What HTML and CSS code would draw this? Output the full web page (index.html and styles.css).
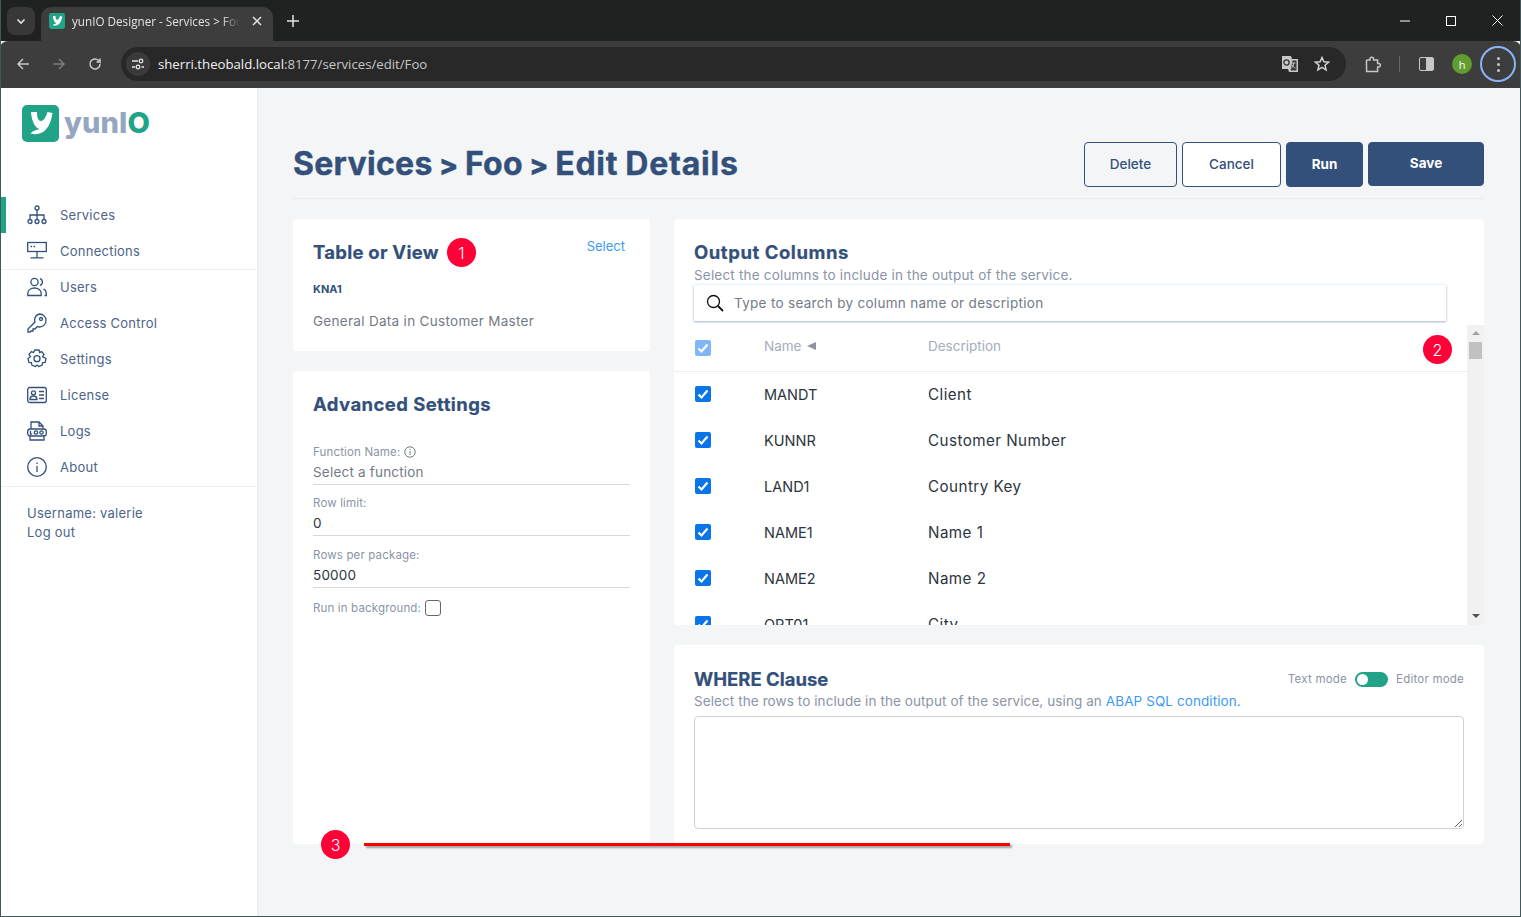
FILE: index.html
```html
<!DOCTYPE html>
<html lang="en">
<head>
<meta charset="utf-8">
<title>yunIO Designer - Services &gt; Foo</title>
<link rel="stylesheet" href="styles.css">
</head>
<body>
<div class="window">
  <header class="tabstrip">
    <button class="tab-search"><svg width="12" height="12" viewBox="0 0 12 12"><path d="M2.5 4.5 6 8l3.5-3.5" fill="none" stroke="#e3e3e3" stroke-width="1.6"/></svg></button>
    <div class="tab">
      <svg class="favicon" viewBox="0 0 37 37"><rect width="37" height="37" rx="5" fill="#20a386"/><path d="M9.500 7H15c0 5 1 9 4 9 2.500 0 5-4 6.500-9l5 1c-1 7-3.500 14-8 18-3 2.700-9 4-14 2.500 2-2.500 6-4 9-4.200-5-2-8-9-8.500-17.300z" fill="#fff"/></svg>
      <span class="tab-title">yunIO Designer - Services &gt; Foo</span>
      <svg class="tab-close" width="10" height="10" viewBox="0 0 10 10"><path d="M1 1l8 8M9 1l-8 8" stroke="#e3e3e3" stroke-width="1.500"/></svg>
    </div>
    <svg class="new-tab" width="12" height="12" viewBox="0 0 12 12"><path d="M6 0v12M0 6h12" stroke="#e3e3e3" stroke-width="1.500"/></svg>
    <div class="win-controls">
      <svg width="10" height="10" viewBox="0 0 10 10"><path d="M0 5h10" stroke="#fff"/></svg>
      <svg width="10" height="10" viewBox="0 0 10 10"><rect x=".5" y=".5" width="9" height="9" fill="none" stroke="#fff"/></svg>
      <svg width="11" height="11" viewBox="0 0 11 11"><path d="M.5.5l10 10M10.500.5l-10 10" stroke="#fff"/></svg>
    </div>
  </header>
  <nav class="toolbar">
    <svg class="tb-icon" width="16" height="16" viewBox="0 0 16 16"><path d="M14 8H3M8 3 3 8l5 5" fill="none" stroke="#c7c7c7" stroke-width="1.500"/></svg>
    <svg class="tb-icon" width="16" height="16" viewBox="0 0 16 16"><path d="M2 8h11M8 3l5 5-5 5" fill="none" stroke="#7b7b7b" stroke-width="1.500"/></svg>
    <svg class="tb-icon" width="16" height="16" viewBox="0 0 16 16"><path d="M13 8a5 5 0 1 1-1.500-3.600L13 6V2.500M13 6H9.500" fill="none" stroke="#c7c7c7" stroke-width="1.500"/></svg>
    <div class="omnibox">
      <span class="site-btn"><svg width="14" height="12" viewBox="0 0 14 12"><path d="M1 3h6M1 9h3M10.500 9H13" stroke="#e3e3e3" stroke-width="1.400" fill="none"/><circle cx="10" cy="3" r="1.800" fill="none" stroke="#e3e3e3" stroke-width="1.300"/><circle cx="7" cy="9" r="1.800" fill="none" stroke="#e3e3e3" stroke-width="1.300"/></svg></span>
      <span class="url"><b>sherri.theobald.local</b>:8177/services/edit/Foo</span>
      <svg class="omni-translate" width="18" height="18" viewBox="0 0 18 18"><path d="M1 1h9l1 3h6v13H8l-1-3H1z" fill="#c7c7c7"/><path d="M11 5h5v11H9z" fill="#3a3a3a" stroke="#c7c7c7"/><circle cx="5.500" cy="7.500" r="2.600" fill="none" stroke="#333" stroke-width="1.300"/><path d="M10.500 8h4M12.500 8c0 3-1 4.500-2 5M11 10c.8 1.500 2 2.500 3.500 3" stroke="#c7c7c7" fill="none"/></svg>
      <svg class="omni-star" width="16" height="16" viewBox="0 0 16 16"><path d="M8 1.500l1.900 4.300 4.600.4-3.500 3 1.100 4.600L8 11.300l-4.100 2.500L5 9.200l-3.500-3 4.600-.4z" fill="none" stroke="#d0d0d0" stroke-width="1.500"/></svg>
    </div>
    <svg class="tb-ext" width="17" height="17" viewBox="0 0 17 17"><path d="M1.500 4H5V3a1.800 1.800 0 0 1 3.600 0v1h4v3.500h1a1.800 1.800 0 0 1 0 3.600h-1v4.400h-11V12" fill="none" stroke="#c7c7c7" stroke-width="1.500"/><path d="M1.500 4v8" stroke="#c7c7c7" stroke-width="1.500"/></svg>
    <span class="tb-sep"></span>
    <span class="tb-panel"></span>
    <span class="avatar">h</span>
    <span class="menu-btn"><i></i><i></i><i></i></span>
  </nav>
  <div class="app">
    <aside class="sidebar">
      <div class="brand">
        <svg class="brand-mark" viewBox="0 0 37 37"><rect width="37" height="37" rx="5" fill="#20a386"/><path d="M9.500 7H15c0 5 1 9 4 9 2.500 0 5-4 6.500-9l5 1c-1 7-3.500 14-8 18-3 2.700-9 4-14 2.500 2-2.500 6-4 9-4.200-5-2-8-9-8.500-17.300z" fill="#fff"/></svg>
        <span class="brand-text">yunI<em>O</em></span>
      </div>
      <ul class="nav nav-first">
        <li class="nav-item active"><svg class="nav-icon" viewBox="0 0 20 20"><circle cx="10" cy="3" r="2"/><circle cx="3" cy="16.500" r="2"/><circle cx="10" cy="16.500" r="2"/><circle cx="17" cy="16.500" r="2"/><path d="M10 5v9.500M3 14.500V10h14v4.500"/></svg>Services</li>
        <li class="nav-item"><svg class="nav-icon" viewBox="0 0 20 20"><rect x=".7" y="1.500" width="18.600" height="9"/><path d="M3.500 5.500h1.500M6.500 5.500h1.500M10 10.500v6M3.500 16.800h13"/></svg>Connections</li>
      </ul>
      <ul class="nav nav-second">
        <li class="nav-item"><svg class="nav-icon" viewBox="0 0 20 20"><circle cx="7.500" cy="5" r="3.600"/><path d="M.8 18.500v-2c0-3.500 3-5.500 6.700-5.500s6.700 2 6.700 5.500v2zM13 1.600a3.600 3.600 0 0 1 0 6.800M16.500 12c1.800.8 2.800 2.300 2.800 4.500v2h-1.800"/></svg>Users</li>
        <li class="nav-item"><svg class="nav-icon" viewBox="0 0 20 20"><path d="M12.500 1a6.500 6.500 0 0 1 0 13c-.8 0-1.500-.1-2.200-.4L8 16H6v2H4l-1 1H1v-3l7-7c-.3-.7-.4-1.400-.4-2.200A6.500 6.500 0 0 1 12.500 1z"/><circle cx="14" cy="6" r="1.500"/></svg>Access Control</li>
        <li class="nav-item"><svg class="nav-icon" viewBox="0 0 20 20"><path d="M8 1h4l.6 2.500 2-.9 2.400 3-1.500 2.100L19 9.500l-.9 3.800-2.500.2-.4 2.500-3.500 1.500L10 16l-1.700 1.500-3.500-1.500-.4-2.500-2.500-.2L1 9.500l2.500-1.800L2 5.600l2.400-3 2 .9z"/><circle cx="10" cy="9.700" r="3"/></svg>Settings</li>
        <li class="nav-item"><svg class="nav-icon" viewBox="0 0 20 20"><rect x=".7" y="2.500" width="18.600" height="15" rx="2"/><circle cx="6.500" cy="7.800" r="2"/><path d="M3 14.500c0-2.500 1.500-3.500 3.500-3.500s3.500 1 3.500 3.500zM12 6.500h5M12 10h5M12 13.500h5"/></svg>License</li>
        <li class="nav-item"><svg class="nav-icon" viewBox="0 0 20 20"><path d="M4 8V1h8l4 4v3M12 1v4h4M3 14v5h14v-5"/><rect x=".7" y="8" width="18.600" height="7" rx="2.500"/><path d="M3.500 9.800v3.400h1.800"/><circle cx="9" cy="11.500" r="1.700"/><circle cx="14.500" cy="11.500" r="1.700"/></svg>Logs</li>
        <li class="nav-item"><svg class="nav-icon" viewBox="0 0 20 20"><circle cx="10" cy="10" r="9.300"/><path d="M10 9v6M10 5.500v1.500"/></svg>About</li>
      </ul>
      <div class="user-box">
        <div>Username: valerie</div>
        <div>Log out</div>
      </div>
    </aside>
    <main class="main">
      <div class="page-head">
        <h1 class="page-title">Services <span class="crumb">&gt;</span> Foo <span class="crumb">&gt;</span> <span class="title-last">Edit Details</span></h1>
        <div class="actions">
          <button class="btn btn-delete">Delete</button>
          <button class="btn btn-cancel">Cancel</button>
          <button class="btn btn-run">Run</button>
          <button class="btn btn-save">Save</button>
        </div>
      </div>
      <div class="columns">
        <div class="col">
          <section class="card card-table">
            <div class="table-head">
              <h2 class="card-title">Table or View</h2>
              <a class="link select-link">Select</a>
            </div>
            <div class="table-code">KNA1</div>
            <div class="table-desc">General Data in Customer Master</div>
          </section>
          <section class="card card-advanced">
            <h2 class="card-title">Advanced Settings</h2>
            <div class="field field-first">
              <label class="field-label">Function Name: <svg class="info" width="12" height="12" viewBox="0 0 12 12"><circle cx="6" cy="6" r="5.200"/><path d="M6 5v4M6 2.800v1.200"/></svg></label>
              <div class="field-value placeholder">Select a function</div>
            </div>
            <div class="field">
              <label class="field-label">Row limit:</label>
              <div class="field-value">0</div>
            </div>
            <div class="field field-third">
              <label class="field-label">Rows per package:</label>
              <div class="field-value">50000</div>
            </div>
            <div class="field-check">
              <span class="field-label">Run in background:</span><span class="box-empty"></span>
            </div>
          </section>
        </div>
        <div class="col">
          <section class="card card-output">
            <h2 class="card-title">Output Columns</h2>
            <p class="card-sub">Select the columns to include in the output of the service.</p>
            <div class="search">
              <svg width="18" height="18" viewBox="0 0 18 18"><circle cx="7.500" cy="7.500" r="6" fill="none" stroke="#111" stroke-width="1.300"/><path d="M12 12l5 5" stroke="#111" stroke-width="1.800"/></svg>
              <span>Type to search by column name or description</span>
            </div>
            <div class="table-wrap">
              <div class="table-scroll">
                <div class="row row-head">
                  <span class="check check-dim"><svg viewBox="0 0 16 16"><path d="M3.500 8.500l3 3 6-7" fill="none" stroke="#fff" stroke-width="2.200"/></svg></span>
                  <span class="c-name">Name <i class="sort"></i></span>
                  <span class="c-desc">Description</span>
                </div>
                <div class="row"><span class="check"><svg viewBox="0 0 16 16"><path d="M3.500 8.500l3 3 6-7" fill="none" stroke="#fff" stroke-width="2.200"/></svg></span><span class="c-name">MANDT</span><span class="c-desc">Client</span></div>
                <div class="row"><span class="check"><svg viewBox="0 0 16 16"><path d="M3.500 8.500l3 3 6-7" fill="none" stroke="#fff" stroke-width="2.200"/></svg></span><span class="c-name">KUNNR</span><span class="c-desc">Customer Number</span></div>
                <div class="row"><span class="check"><svg viewBox="0 0 16 16"><path d="M3.500 8.500l3 3 6-7" fill="none" stroke="#fff" stroke-width="2.200"/></svg></span><span class="c-name">LAND1</span><span class="c-desc">Country Key</span></div>
                <div class="row"><span class="check"><svg viewBox="0 0 16 16"><path d="M3.500 8.500l3 3 6-7" fill="none" stroke="#fff" stroke-width="2.200"/></svg></span><span class="c-name">NAME1</span><span class="c-desc">Name 1</span></div>
                <div class="row"><span class="check"><svg viewBox="0 0 16 16"><path d="M3.500 8.500l3 3 6-7" fill="none" stroke="#fff" stroke-width="2.200"/></svg></span><span class="c-name">NAME2</span><span class="c-desc">Name 2</span></div>
                <div class="row"><span class="check"><svg viewBox="0 0 16 16"><path d="M3.500 8.500l3 3 6-7" fill="none" stroke="#fff" stroke-width="2.200"/></svg></span><span class="c-name">ORT01</span><span class="c-desc">City</span></div>
              </div>
              <div class="scrollbar">
                <i class="arrow-up"></i>
                <i class="thumb"></i>
                <i class="arrow-down"></i>
              </div>
            </div>
          </section>
          <section class="card card-where">
            <div class="where-head">
              <h2 class="card-title">WHERE Clause</h2>
              <div class="mode"><span>Text mode</span><span class="switch"><i></i></span><span>Editor mode</span></div>
            </div>
            <p class="card-sub">Select the rows to include in the output of the service, using an <a class="link">ABAP SQL condition.</a></p>
            <textarea class="where-input"></textarea>
          </section>
        </div>
      </div>
    </main>
  </div>
  <span class="badge badge-1">1</span>
  <span class="badge badge-2">2</span>
  <span class="badge badge-3">3</span>
  <span class="red-line"></span>
</div>
</body>
</html>
```
FILE: styles.css
```css
* { box-sizing: border-box; }
html, body { margin: 0; padding: 0; height: 100%; overflow: hidden; }
body { font-family: Inter, "Noto Sans", sans-serif; color: #33507a; }
.window { position: relative; width: 1521px; height: 917px; display: flex; flex-direction: column; border: 1px solid #3e5a5a; border-top: 0; background: #f4f5f7; overflow: hidden; }

.tabstrip { height: 41px; margin: 0 -1px; background: #202221; display: flex; align-items: flex-end; padding-left: 7px; flex: none; }
.tab-search { width: 28px; height: 28px; margin-bottom: 6px; border: 0; border-radius: 8px; background: #383838; display: flex; align-items: center; justify-content: center; padding: 0; }
.tab { width: 232px; height: 34px; margin-left: 6px; background: #3d3d3d; border-radius: 10px 10px 0 0; display: flex; align-items: center; padding: 0 0 6px 8px; font-family: "Open Sans", sans-serif; font-size: 11.700px; color: #e3e3e3; }
.favicon { width: 16px; height: 16px; flex: none; }
.tab-title { width: 168px; margin-left: 7px; white-space: nowrap; overflow: hidden; -webkit-mask-image: linear-gradient(90deg, #000 150px, transparent 168px); mask-image: linear-gradient(90deg, #000 150px, transparent 168px); }
.tab-close { margin-left: 12px; flex: none; }
.new-tab { margin: 0 0 14px 14px; }
.win-controls { margin-left: auto; display: flex; align-items: center; gap: 36px; height: 41px; padding-right: 18px; }

.toolbar { height: 47px; margin: 0 -1px; background: #3d3d3d; border-radius: 8px 8px 0 0; display: flex; align-items: center; padding: 0 0 1px 15px; flex: none; }
.tb-icon { margin-right: 20px; flex: none; }
.tb-icon:nth-child(3) { margin-right: 18px; }
.omnibox { width: 1225px; height: 34px; background: #282828; border-radius: 17px; display: flex; align-items: center; padding-left: 5px; flex: none; margin-right: 19px; }
.site-btn { width: 24px; height: 24px; border-radius: 50%; background: #3a3a3a; display: flex; align-items: center; justify-content: center; flex: none; }
.url { margin-left: 8px; font-family: "Open Sans", sans-serif; font-size: 13.200px; color: #c7c7c7; white-space: nowrap; }
.url b { font-weight: 400; color: #f0f0f0; }
.omni-translate { margin-left: auto; }
.omni-star { margin: 0 16px 0 15px; }
.tb-ext { flex: none; }
.tb-sep { width: 1px; height: 16px; background: #666; margin-left: 17px; flex: none; }
.tb-panel { width: 15px; height: 14px; margin-left: 19px; border: 1.500px solid #c7c7c7; border-radius: 2px; background: linear-gradient(90deg, transparent 50%, #c7c7c7 50%); flex: none; }
.avatar { width: 20px; height: 20px; margin-left: 18px; border-radius: 50%; background: #5f9e2f; color: #fff; font: 11px "Open Sans", sans-serif; display: flex; align-items: center; justify-content: center; flex: none; }
.menu-btn { width: 36px; height: 36px; margin-left: 8px; border: 2px solid #8ab4f8; border-radius: 50%; display: flex; flex-direction: column; gap: 3px; align-items: center; justify-content: center; flex: none; }
.menu-btn i { width: 3px; height: 3px; border-radius: 50%; background: #c7c7c7; }

.app { flex: 1; display: flex; min-height: 0; }
.sidebar { width: 256px; flex: none; background: #fff; box-shadow: 1px 0 3px rgba(0,0,0,.05); }
.brand { height: 109px; padding: 17px 0 0 21px; display: flex; align-items: flex-start; }
.brand-mark { width: 37px; height: 37px; flex: none; }
.brand-text { margin: -1px 0 0 5px; font-size: 29px; line-height: 37px; font-weight: 800; color: #95a6c0; letter-spacing: .1px; }
.brand-text em { font-style: normal; color: #20a386; }
.nav { list-style: none; margin: 0; padding: 0; border-bottom: 1px solid #eceef1; }
.nav-item { position: relative; height: 36px; padding-left: 26px; display: flex; align-items: center; font-size: 13px; letter-spacing: .25px; color: #4c6488; }
.nav-first { height: 73px; }
.nav-first .nav-item:first-child::before { content: ""; position: absolute; left: 0; top: 0; width: 5px; height: 36px; background: #20a386; }
.nav-icon { width: 20px; height: 20px; margin-right: 13px; fill: none; stroke: #33507a; stroke-width: 1.300; flex: none; }
.nav-second { height: 218px; margin-top: -1px; }
.user-box { padding: 17px 0 0 26px; font-size: 13px; line-height: 19px; letter-spacing: .25px; color: #4c6488; }

.main { flex: 1; min-width: 0; padding: 54px 36px 0; }
.page-head { display: flex; justify-content: space-between; align-items: flex-start; height: 57px; border-bottom: 1px solid #eaecef; }
.page-title { margin: 2px 0 0; font-size: 32px; line-height: 40px; font-weight: 700; color: #33507a; letter-spacing: .3px; word-spacing: -1.500px; white-space: nowrap; -webkit-text-stroke: .4px #33507a; }
.title-last { letter-spacing: .8px; }
.crumb { font-size: 28px; font-weight: 800; }
.actions { display: flex; gap: 5px; }
.btn { height: 45px; border: 1px solid #33507a; border-radius: 4px; background: transparent; font-family: Inter, sans-serif; font-size: 13.500px; font-weight: 500; color: #33507a; padding: 0 0 2px; }
.btn-delete { width: 93px; }
.btn-cancel { width: 99px; background: #fff; }
.btn-run { width: 77px; background: #33507a; color: #fff; font-weight: 700; }
.btn-save { width: 116px; height: 44px; background: #33507a; color: #fff; font-weight: 700; padding-bottom: 3px; }

.columns { display: grid; grid-template-columns: 357px 810px; grid-template-rows: 625px; gap: 24px; margin-top: 20px; }
.col { display: flex; flex-direction: column; gap: 20px; min-height: 0; }
.card { background: #fff; border-radius: 4px; padding: 20px; }
.card-title { margin: 0; font-size: 18.500px; line-height: 28px; font-weight: 700; color: #33507a; white-space: nowrap; -webkit-text-stroke: .2px #33507a; }
.card-table { height: 132px; flex: none; }
.card-table .card-title { letter-spacing: .25px; margin-top: -1px; }
.card-advanced .card-title { letter-spacing: .42px; margin-top: -1px; }
.card-output .card-title { letter-spacing: .55px; margin-top: -1px; }
.table-head { display: flex; justify-content: space-between; align-items: flex-start; }
.link { color: #3b9bf5; }
.select-link { font-size: 13px; line-height: 16px; margin: -1px 5px 0 0; }
.table-code { margin-top: 15px; font-size: 11px; line-height: 16px; font-weight: 700; color: #33507a; }
.table-desc { margin-top: 15px; font-size: 13.500px; line-height: 18px; letter-spacing: .3px; color: #737a85; }

.card-advanced { flex: 1; min-height: 0; }
.field { border-bottom: 1px solid #d4d7dc; height: 51px; padding-top: 10px; width: 317px; }
.field-third { height: 52px; padding-top: 11px; }
.field-first { margin-top: 15px; height: 52px; padding-top: 11px; }
.field-label { display: block; font-size: 11.500px; line-height: 16px; letter-spacing: .15px; color: #8a94a6; }
.field-value { margin-top: 3px; font-size: 13.500px; line-height: 18px; letter-spacing: .2px; color: #2c3440; }
.placeholder { color: #737a85; }
.info { vertical-align: -2px; fill: none; stroke: #737a85; }
.field-check { display: flex; align-items: center; margin-top: 12px; }
.field-check .field-label { white-space: nowrap; }
.box-empty { width: 16px; height: 16px; margin-left: 4px; border: 1px solid #666; border-radius: 3px; background: #fff; }

.card-output { height: 406px; flex: none; padding: 20px 0 0 20px; display: flex; flex-direction: column; overflow: hidden; }
.card-output .card-sub { margin: 0 0 1px; letter-spacing: .19px; }
.card-sub { margin: 0; font-size: 13.500px; line-height: 18px; letter-spacing: .1px; color: #8a94a6; white-space: nowrap; }
.search { width: 752px; height: 36px; flex: none; background: #fff; display: flex; align-items: center; padding-left: 12px; box-shadow: 0 1px 2px rgba(60,90,130,.4), 0 0 3px rgba(70,150,240,.2); font-size: 13.500px; letter-spacing: .3px; color: #737a85; }
.search span { margin-left: 10px; }
.table-wrap { display: flex; flex: 1; min-height: 0; margin: 4px 0 0 -20px; }
.table-scroll { flex: 1; overflow: hidden; }
.row { display: flex; align-items: center; height: 46px; padding-left: 21px; font-size: 14.500px; color: #2c3440; }
.c-desc { font-size: 15.200px; letter-spacing: .45px; }
.row-head { box-shadow: 0 1px 0 #eceef1; font-size: 13.500px; color: #a5adba; }
.row-head .c-name, .row-head .c-desc { font-size: 13.500px; letter-spacing: 0; margin-top: -4px; }
.check { width: 16px; height: 16px; border-radius: 2px; background: #0a75e8; flex: none; display: block; }
.check svg { display: block; }
.check-dim { background: #80b6f5; }
.c-name { margin-left: 53px; width: 164px; flex: none; display: flex; align-items: center; gap: 6px; }
.sort { width: 0; height: 0; border-style: solid; border-width: 4.500px 9px 4.500px 0; border-color: transparent #8c94a2 transparent transparent; }
.scrollbar { width: 17px; flex: none; background: #f1f1f1; display: flex; flex-direction: column; align-items: center; padding-top: 6px; }
.arrow-up { width: 0; height: 0; border-style: solid; border-width: 0 4px 4px; border-color: transparent transparent #a3a3a3; }
.thumb { width: 13px; height: 17px; margin-top: 7px; background: #c1c1c1; }
.arrow-down { width: 0; height: 0; margin-top: auto; margin-bottom: 7px; border-style: solid; border-width: 4px 4px 0; border-color: #505050 transparent transparent; }

.card-where { flex: 1; min-height: 0; padding: 20px 20px 15px; }
.where-head { display: flex; justify-content: space-between; align-items: center; height: 28px; }
.mode { display: flex; align-items: center; gap: 8px; font-size: 11.500px; letter-spacing: .22px; color: #8a94a6; }
.switch { width: 33px; height: 15px; border-radius: 8px; background: #20a386; display: block; padding: 2px 0 0 2px; }
.switch i { display: block; width: 11px; height: 11px; border-radius: 50%; background: #fff; }
.card-where .card-sub { margin-top: -1px; letter-spacing: .09px; }
.where-input { display: block; width: 770px; height: 113px; margin-top: 6px; border: 1px solid #ccd1d8; border-radius: 4px; background: #fff; padding: 6px; outline: 0; }

.badge { position: absolute; width: 29px; height: 29px; border-radius: 50%; background: #ff0037; color: #fff; font-size: 16px; font-weight: 300; display: flex; align-items: center; justify-content: center; }
.badge-1 { left: 446px; top: 238px; }
.badge-2 { left: 1422px; top: 335px; }
.badge-3 { left: 320px; top: 830px; }
.red-line { position: absolute; left: 363px; top: 843px; width: 646px; height: 3px; background: #f00; box-shadow: 2px 2px 2px rgba(0,0,0,.35); }
```
